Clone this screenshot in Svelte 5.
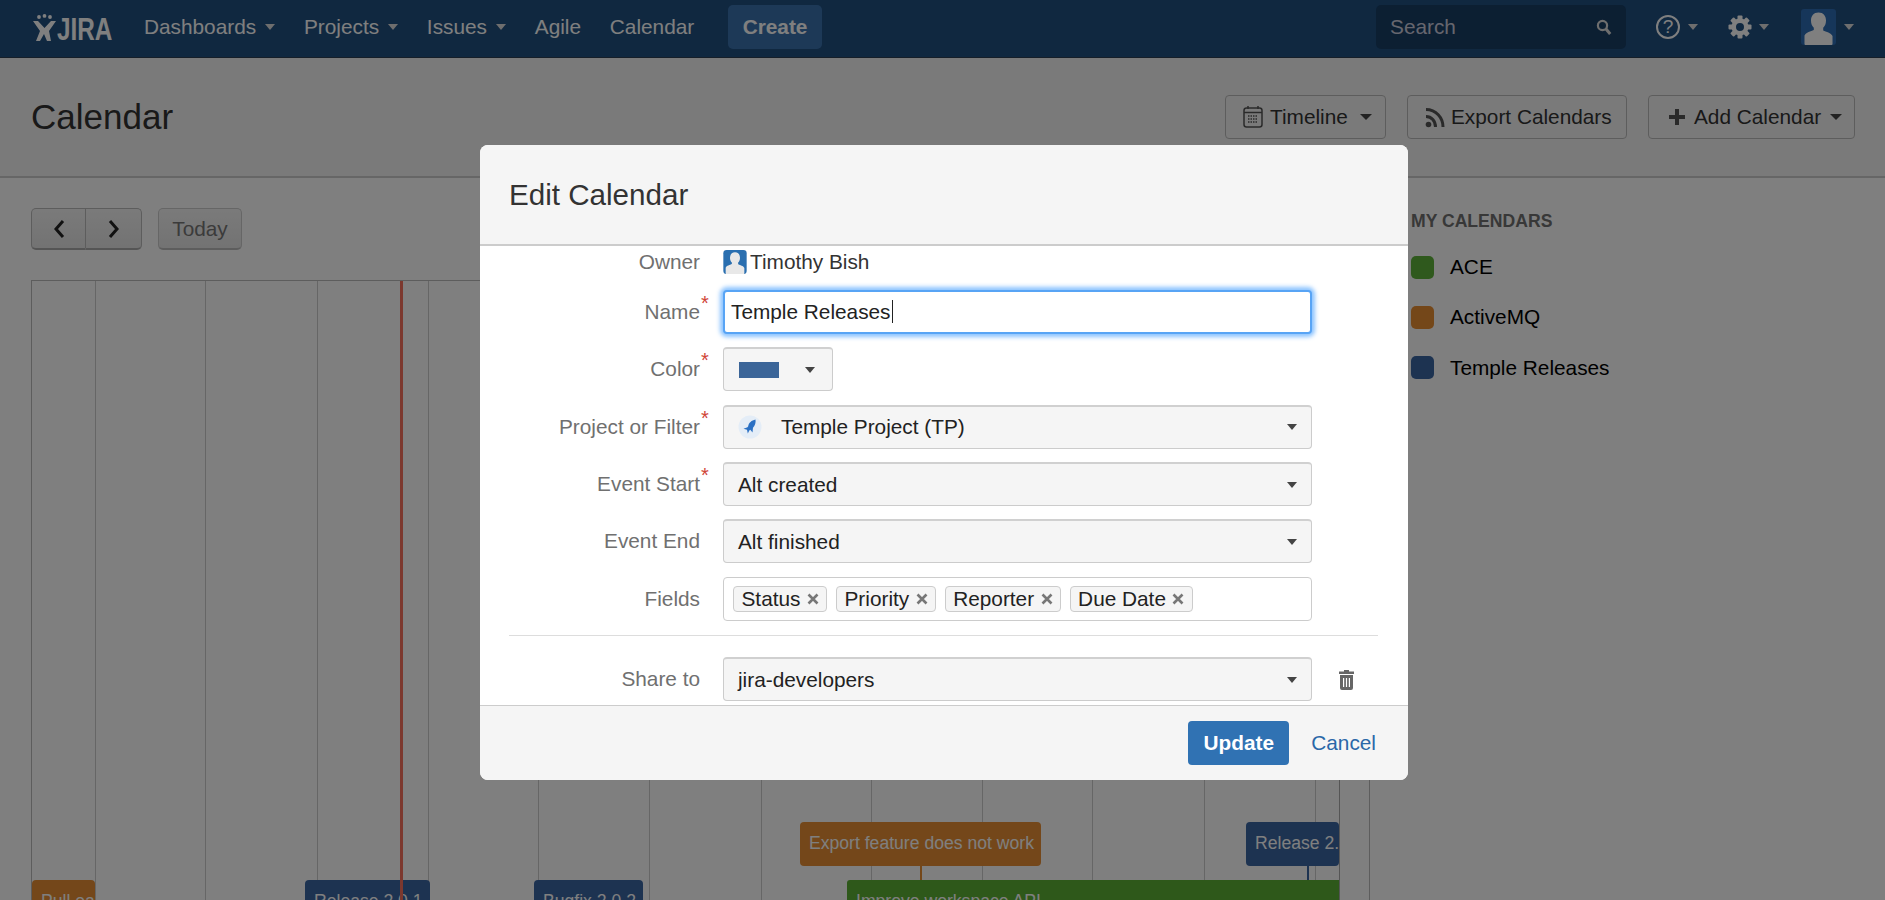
<script>
  const navItems = [
    { label: 'Dashboards', caret: true },
    { label: 'Projects', caret: true },
    { label: 'Issues', caret: true },
    { label: 'Agile', caret: false },
    { label: 'Calendar', caret: false }
  ];
  const gridLines = [95, 205, 317, 428, 538, 649, 761, 871, 982, 1092, 1204, 1315];
  const calendars = [
    { name: 'ACE', color: '#5fb33a' },
    { name: 'ActiveMQ', color: '#e98e33' },
    { name: 'Temple Releases', color: '#3a66a3' }
  ];
  const tags = ['Status', 'Priority', 'Reporter', 'Due Date'];
</script>

<div class="page">
  <nav class="nav">
    <div class="logo">
      <svg width="23" height="28" viewBox="0 0 23 28" aria-hidden="true">
        <circle cx="6" cy="3" r="1.9" fill="#fff"/><circle cx="11.5" cy="1.9" r="1.9" fill="#fff"/><circle cx="17" cy="3" r="1.9" fill="#fff"/>
        <path d="M0 7h5l6.5 7L18 7h5l-7 10 2 10h-4l-3-7-4 7H3l4-10z" fill="#fff"/>
      </svg>
      <span class="jira">JIRA</span>
    </div>
    <ul class="nav-items">
      {#each navItems as item}
        <li>{item.label}{#if item.caret}<i class="caret nav-caret"></i>{/if}</li>
      {/each}
    </ul>
    <div class="create">Create</div>
    <div class="search">
      <span>Search</span>
      <svg width="16" height="17" viewBox="0 0 16 17" aria-hidden="true"><circle cx="6.5" cy="6.5" r="4.6" fill="none" stroke="#ddd" stroke-width="2.2"/><path d="M10 10l4.2 5" stroke="#ddd" stroke-width="3"/></svg>
    </div>
    <div class="nav-icon help">
      <span class="help-circle">?</span><i class="caret nav-caret"></i>
    </div>
    <div class="nav-icon gear">
      <svg width="24" height="24" viewBox="0 0 24 24" aria-hidden="true">
        <g fill="#fff"><path fill-rule="evenodd" d="M12 3.500a8.500 8.500 0 100 17 8.500 8.500 0 000-17zm0 4.500a4 4 0 110 8 4 4 0 010-8z"/>
        <rect x="9.5" y="0.5" width="5" height="5" rx="1"/><rect x="9.5" y="18.5" width="5" height="5" rx="1"/><rect x="0.5" y="9.5" width="5" height="5" rx="1"/><rect x="18.5" y="9.5" width="5" height="5" rx="1"/>
        <rect x="9.5" y="0.5" width="5" height="5" rx="1" transform="rotate(45 12 12)"/><rect x="9.5" y="18.5" width="5" height="5" rx="1" transform="rotate(45 12 12)"/><rect x="0.5" y="9.5" width="5" height="5" rx="1" transform="rotate(45 12 12)"/><rect x="18.5" y="9.5" width="5" height="5" rx="1" transform="rotate(45 12 12)"/></g>
      </svg>
      <i class="caret nav-caret"></i>
    </div>
    <div class="nav-icon user">
      <svg width="35" height="36" viewBox="0 0 35 36" aria-hidden="true">
        <rect width="35" height="36" rx="3" fill="#2c6cb4"/>
        <path d="M17.500 3.500c4.800 0 7.500 3.300 7.500 8 0 3-1 5.600-2.800 7.300v2.700c2.800 1.500 8 2.300 9.300 5.500V35q0 1-1 1H4.500q-1 0-1-1v-8.500c1.300-3.200 6.500-4 9.300-5.500v-2.200c-1.800-1.700-2.800-4.300-2.800-7.300 0-4.700 2.700-8 7.500-8z" fill="#fff"/>
      </svg>
      <i class="caret nav-caret"></i>
    </div>
  </nav>

  <header class="page-head">
    <h1>Calendar</h1>
    <div class="actions">
      <div class="btn timeline">
        <svg width="20" height="24" viewBox="0 0 20 24" aria-hidden="true"><rect x="1" y="3" width="18" height="19" rx="2.500" fill="none" stroke="#555" stroke-width="1.500"/><path d="M1 7.500h18" stroke="#555" stroke-width="1.500"/><path d="M5 1v3M15 1v3" stroke="#555" stroke-width="1.500"/><path d="M5 11h10M5 14h10M5 17h10" stroke="#555" stroke-width="1.500" stroke-dasharray="1.500 1"/></svg>
        <span>Timeline</span><i class="caret dark"></i>
      </div>
      <div class="btn export">
        <svg width="22" height="24" viewBox="0 0 22 24" aria-hidden="true"><circle cx="4.500" cy="19.500" r="2.800" fill="#555"/><path d="M2 11.500c5.500 0 9.500 4.500 9.500 10.500M2 4.500c10 0 17 8 17 17.500" fill="none" stroke="#555" stroke-width="3"/></svg>
        <span>Export Calendars</span>
      </div>
      <div class="btn add">
        <svg width="16" height="18" viewBox="0 0 16 18" aria-hidden="true"><path d="M8 1v16M0 9h16" stroke="#555" stroke-width="4"/></svg>
        <span>Add Calendar</span><i class="caret dark"></i>
      </div>
    </div>
  </header>

  <main class="content">
    <div class="left">
      <div class="toolbar">
        <div class="pager">
          <span class="pager-btn"><svg width="14" height="20" viewBox="0 0 14 20" aria-hidden="true"><path d="M11 2L4 10l7 8" fill="none" stroke="#222" stroke-width="3"/></svg></span>
          <span class="pager-btn"><svg width="14" height="20" viewBox="0 0 14 20" aria-hidden="true"><path d="M3 2l7 8-7 8" fill="none" stroke="#222" stroke-width="3"/></svg></span>
        </div>
        <div class="today">Today</div>
      </div>
      <div class="timeline-grid">
        {#each gridLines as x}
          <span class="grid-line" style="left:{x - 32}px"></span>
        {/each}
        <span class="now"></span>
        <span class="stem" style="left:888px;top:585px;background:#e98e33"></span>
        <span class="stem" style="left:1275px;top:585px;background:#3a66a3"></span>
        <div class="event orange" style="left:0;top:599px;width:63px">Pull ea</div>
        <div class="event blue" style="left:273px;top:599px;width:125px">Release 2.0.1</div>
        <div class="event blue" style="left:502px;top:599px;width:109px">Bugfix 2.0.2</div>
        <div class="event orange" style="left:768px;top:541px;width:241px">Export feature does not work</div>
        <div class="event blue" style="left:1214px;top:541px;width:93px">Release 2.0.3</div>
        <div class="event green" style="left:815px;top:599px;width:492px">Improve workspace API</div>
        <span class="grid-end"></span>
      </div>
    </div>
    <aside class="side">
      <h2>MY CALENDARS</h2>
      <ul>
        {#each calendars as cal}
          <li><i class="swatch" style="background:{cal.color}"></i>{cal.name}</li>
        {/each}
      </ul>
    </aside>
  </main>

  <div class="overlay"></div>

  <section class="modal">
    <div class="modal-head"><h3>Edit Calendar</h3></div>
    <div class="modal-body">
      <div class="row owner">
        <span class="label">Owner</span>
        <div class="owner-val">
          <svg width="24" height="24" viewBox="0 0 35 36" aria-hidden="true">
            <rect width="35" height="36" rx="5" fill="#2a6fb0"/>
            <path d="M17.500 3.500c4.800 0 7.500 3.300 7.500 8 0 3-1 5.600-2.800 7.300v2.700c2.800 1.500 8 2.300 9.300 5.500V36H3.500v-9.500c1.300-3.200 6.500-4 9.300-5.500v-2.200c-1.800-1.700-2.800-4.300-2.800-7.300 0-4.700 2.700-8 7.500-8z" fill="#e8e8e8"/>
          </svg>
          <span>Timothy Bish</span>
        </div>
      </div>
      <div class="row">
        <span class="label req">Name</span>
        <div class="input focus">Temple Releases<i class="text-caret"></i></div>
      </div>
      <div class="row">
        <span class="label req">Color</span>
        <div class="select color"><i class="color-chip"></i><i class="caret dark"></i></div>
      </div>
      <div class="row">
        <span class="label req">Project or Filter</span>
        <div class="select">
          <svg class="proj" width="24" height="24" viewBox="0 0 24 24" aria-hidden="true">
            <circle cx="12" cy="12" r="11.500" fill="#e4edf7"/>
            <path d="M17.500 4.500c.5 3-.5 6-2.500 8.200l-.5 4.800-2.200-2.700-1 .7-1.500 3-.8-3.800-3.500-.9 4-1.500.7-1c.6-3.500 3.300-6 7.300-6.800z" fill="#2a70c4"/>
          </svg>
          <span>Temple Project (TP)</span><i class="caret dark end"></i>
        </div>
      </div>
      <div class="row">
        <span class="label req">Event Start</span>
        <div class="select"><span>Alt created</span><i class="caret dark end"></i></div>
      </div>
      <div class="row">
        <span class="label">Event End</span>
        <div class="select"><span>Alt finished</span><i class="caret dark end"></i></div>
      </div>
      <div class="row">
        <span class="label">Fields</span>
        <div class="input tags">
          {#each tags as tag}
            <span class="tag">{tag}<svg width="12" height="12" viewBox="0 0 12 12" aria-hidden="true"><path d="M1.500 1.500l9 9M10.500 1.500l-9 9" stroke="#777" stroke-width="2.600"/></svg></span>
          {/each}
        </div>
      </div>
      <hr />
      <div class="row share">
        <span class="label">Share to</span>
        <div class="select"><span>jira-developers</span><i class="caret dark end"></i></div>
        <svg class="trash" width="17" height="21" viewBox="0 0 17 21" aria-hidden="true">
          <path d="M6 2.500V1h5v1.500h5V5H1V2.500z" fill="#666"/>
          <path fill-rule="evenodd" d="M2 6h13v13a2 2 0 01-2 2H4a2 2 0 01-2-2zm3 3v9h1.200V9zm2.900 0v9h1.200V9zm2.900 0v9H12V9z" fill="#666"/>
        </svg>
      </div>
    </div>
    <div class="modal-foot">
      <div class="update">Update</div>
      <div class="cancel">Cancel</div>
    </div>
  </section>
</div>

<style>
  :global(body) { margin: 0; background: #fff; }
  .page {
    position: relative;
    width: 1885px;
    height: 900px;
    overflow: hidden;
    font-family: "Liberation Sans", Arial, sans-serif;
    font-size: 20.8px;
    color: #333;
    background: #fff;
  }
  .nav {
    display: flex;
    align-items: center;
    height: 54px;
    padding: 0 0 3px 33px;
    background: #205081;
    color: #fff;
    border-bottom: 1px solid #2d3f52;
    box-sizing: content-box;
  }
  .logo { display: flex; align-items: flex-start; width: 111px; height: 28px; margin-top: 1px; flex: none; }
  .jira {
    font-weight: 700;
    font-size: 32px;
    line-height: 30px;
    margin-left: 1px;
    display: inline-block;
    transform: scaleX(.76);
    transform-origin: left center;
  }
  .nav-items { display: flex; list-style: none; margin: 0; padding: 0; }
  .nav-items li { margin-right: 28.800px; white-space: nowrap; display: flex; align-items: center; }
  .caret {
    display: inline-block;
    width: 0;
    height: 0;
    border-left: 6px solid transparent;
    border-right: 6px solid transparent;
    border-top: 6px solid #ccc;
  }
  .nav-caret { margin-left: 9px; border-top-color: #ddd; border-left-width: 5.500px; border-right-width: 5.500px; }
  .dark { border-top-color: #444; }
  .end { margin-left: auto; border-left-width: 5.500px; border-right-width: 5.500px; }
  .create {
    width: 94px;
    height: 44px;
    margin-left: 5px;
    display: flex;
    align-items: center;
    justify-content: center;
    background: #3b73af;
    border-radius: 5px;
    font-weight: 700;
  }
  .search {
    width: 250px;
    height: 44px;
    margin-left: 554px;
    padding: 0 14px;
    box-sizing: border-box;
    display: flex;
    align-items: center;
    justify-content: space-between;
    background: #183e65;
    border-radius: 5px;
    color: #ccd;
  }
  .nav-icon { display: flex; align-items: center; }
  .help { margin-left: 30px; }
  .help-circle {
    width: 20px;
    height: 20px;
    border: 2px solid #fff;
    border-radius: 50%;
    display: flex;
    align-items: center;
    justify-content: center;
    font-size: 19px;
  }
  .help .nav-caret { margin-left: 8px; }
  .gear { margin-left: 30px; }
  .gear .nav-caret { margin-left: 7px; }
  .user { margin-left: 32px; }
  .user .nav-caret { margin-left: 8px; }

  .page-head {
    height: 118px;
    background: #f5f5f5;
    border-bottom: 2px solid #ccc;
    padding: 0 30px 0 31px;
    display: flex;
    justify-content: space-between;
    box-sizing: content-box;
  }
  h1 { margin: 0; font-size: 35px; font-weight: 400; line-height: 40px; padding-top: 39px; }
  .actions { display: flex; gap: 21px; padding-top: 37px; }
  .btn {
    height: 44px;
    box-sizing: border-box;
    display: flex;
    align-items: center;
    background: #f5f5f5;
    border: 1px solid #bbb;
    border-radius: 4px;
  }
  .timeline { width: 161px; padding-left: 17px; }
  .timeline span { margin-left: 7px; }
  .timeline .caret { margin-left: 12px; }
  .export { width: 220px; padding-left: 16px; }
  .export span { margin-left: 5px; }
  .add { width: 207px; padding-left: 20px; }
  .add span { margin-left: 9px; }
  .add .caret { margin-left: 9px; }

  .content { display: flex; position: relative; }
  .left { width: 1370px; margin-left: 31px; flex: none; }
  .toolbar { display: flex; gap: 16px; padding: 30px 0; height: 42px; box-sizing: content-box; }
  .pager { display: flex; }
  .pager-btn {
    width: 55px;
    height: 42px;
    box-sizing: border-box;
    display: flex;
    align-items: center;
    justify-content: center;
    background: linear-gradient(#f5f5f5, #e6e6e6);
    border: 1px solid #bbb;
    border-bottom: 2px solid #aaa;
    border-radius: 5px 0 0 5px;
  }
  .pager-btn + .pager-btn { border-left: 0; border-radius: 0 5px 5px 0; width: 56px; }
  .today {
    width: 84px;
    height: 42px;
    box-sizing: border-box;
    display: flex;
    align-items: center;
    justify-content: center;
    color: #777;
    background: linear-gradient(#f5f5f5, #e6e6e6);
    border: 1px solid #ccc;
    border-bottom: 2px solid #bbb;
    border-radius: 5px;
  }
  .timeline-grid {
    position: relative;
    width: 1339px;
    height: 700px;
    box-sizing: border-box;
    border: 1px solid #bbb;
    overflow: hidden;
  }
  .grid-line { position: absolute; top: 0; bottom: 0; width: 1px; background: #ccc; }
  .grid-end { position: absolute; left: 1307px; top: 0; bottom: 0; width: 1px; background: #aaa; }
  .now { position: absolute; left: 368px; top: 0; bottom: 0; width: 3px; background: #f8705c; z-index: 3; }
  .stem { position: absolute; width: 2px; height: 16px; }
  .event {
    position: absolute;
    height: 44px;
    box-sizing: border-box;
    padding: 0 9px;
    line-height: 43px;
    font-size: 17.6px;
    color: #fff;
    white-space: nowrap;
    overflow: hidden;
    border-radius: 4px;
  }
  .orange { background: #e88f34; }
  .blue { background: #3a66a3; }
  .green { background: #5cb035; border-radius: 3px 0 0 3px; }

  .side { margin-left: 10px; padding-top: 33px; }
  .side h2 { margin: 0; font-size: 17.6px; font-weight: 700; line-height: 20px; color: #707070; }
  .side ul { list-style: none; margin: 24px 0 0; padding: 0; }
  .side li { display: flex; align-items: center; height: 24px; margin-bottom: 26.400px; color: #000; }
  .swatch { width: 23px; height: 23px; border-radius: 5px; margin-right: 16px; }

  .overlay { position: absolute; inset: 0; background: rgba(0, 0, 0, .5); z-index: 5; }

  .modal {
    position: absolute;
    left: 480px;
    top: 145px;
    width: 928px;
    height: 635px;
    z-index: 6;
    display: flex;
    flex-direction: column;
    background: #fff;
    border-radius: 8px;
    overflow: hidden;
  }
  .modal-head {
    height: 99px;
    flex: none;
    background: #f5f5f5;
    border-bottom: 2px solid #ccc;
    padding-left: 29px;
    display: flex;
    align-items: center;
  }
  h3 { margin: 0; font-size: 29.600px; font-weight: 400; color: #333; }
  .modal-body { flex: 1; min-height: 0; overflow: hidden; padding-top: 4px; display: flex; flex-direction: column; gap: 13.400px; }
  .row { display: flex; align-items: center; flex: none; }
  .label { width: 220px; flex: none; text-align: right; margin-right: 23px; color: #707070; position: relative; }
  .req::after {
    content: "*";
    position: absolute;
    left: 100%;
    top: -8px;
    color: #d04437;
    font-size: 20px;
    margin-left: 1px;
  }
  .owner { height: 24px; margin-bottom: 2.500px; }
  .owner-val { display: flex; align-items: center; color: #333; }
  .owner-val span { margin-left: 3px; }
  .owner-val svg { flex: none; }
  .input, .select {
    width: 589px;
    height: 44px;
    box-sizing: border-box;
    border-radius: 4px;
    display: flex;
    align-items: center;
  }
  .focus {
    background: #fff;
    border: 2px solid #58a4f5;
    box-shadow: 0 0 4px 3px rgba(110, 180, 255, .8);
    padding-left: 6px;
    color: #222;
  }
  .text-caret { display: inline-block; width: 1px; height: 23px; background: #222; margin-left: 1px; }
  .select {
    background: #f5f5f5;
    border: 1px solid #ccc;
    border-top-width: 2px;
    border-top-color: #d0d0d0;
    padding: 0 14px 0 14px;
    color: #222;
  }
  .color { width: 110px; padding-left: 15px; }
  .color-chip { width: 40px; height: 16px; background: #3b6598; }
  .color .caret { margin-left: 26px; border-left-width: 5.500px; border-right-width: 5.500px; }
  .proj { margin-right: 19px; flex: none; }
  .tags { background: #fff; border: 1px solid #ccc; padding-left: 9px; gap: 8.500px; }
  .tag {
    height: 26px;
    box-sizing: border-box;
    display: inline-flex;
    align-items: center;
    gap: 6.500px;
    padding: 0 7.500px;
    background: #f5f5f5;
    border: 1px solid #ccc;
    border-radius: 4px;
    color: #222;
  }
  hr { border: 0; height: 1px; background: #ddd; margin: 0 30px 0 29px; width: 869px; position: relative; top: 1px; flex: none; }
  .share { margin-top: 8.500px; }
  .trash { margin-left: 26px; }
  .modal-foot {
    height: 74px;
    flex: none;
    background: #f5f5f5;
    border-top: 1px solid #ccc;
    box-sizing: content-box;
    display: flex;
    align-items: center;
    justify-content: flex-end;
    padding-right: 32px;
    gap: 22px;
  }
  .update {
    width: 101px;
    height: 44px;
    display: flex;
    align-items: center;
    justify-content: center;
    background: #3072b3;
    border-radius: 4px;
    color: #fff;
    font-weight: 700;
  }
  .cancel { color: #2a67a8; }
</style>
